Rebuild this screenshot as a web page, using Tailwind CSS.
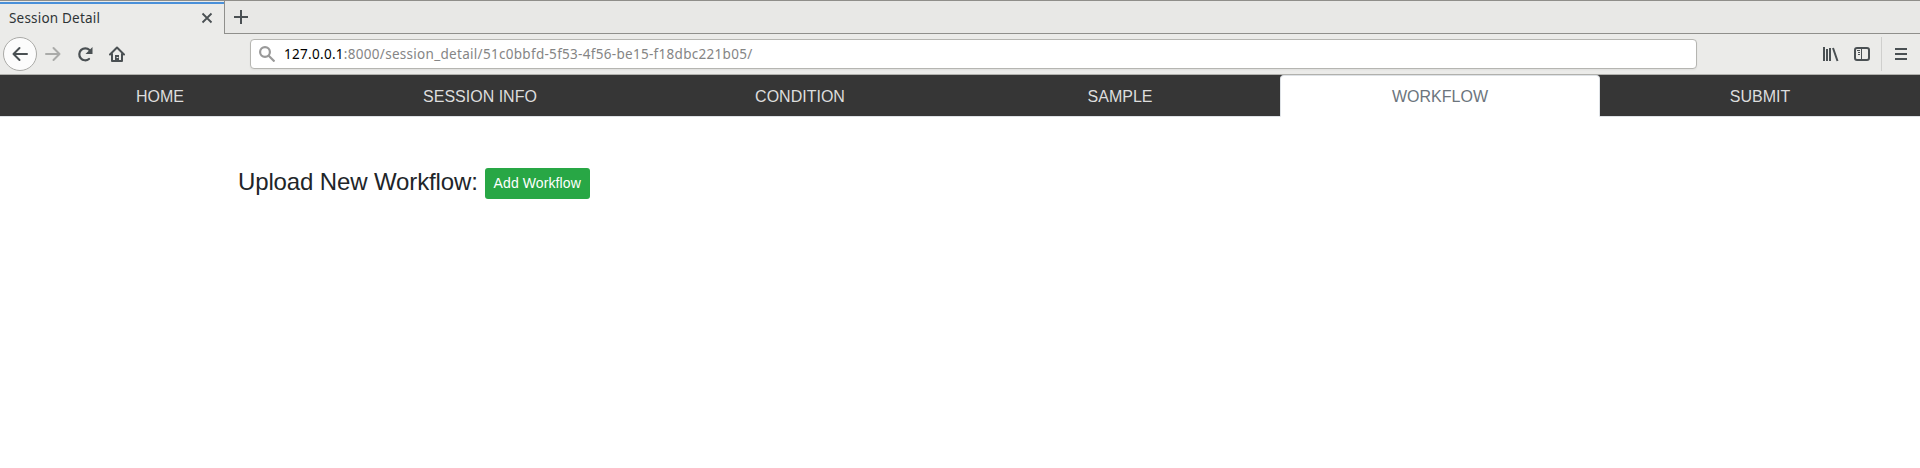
<!DOCTYPE html>
<html lang="en">
<head>
<meta charset="utf-8">
<title>Session Detail</title>
<script src="https://cdn.jsdelivr.net/npm/@tailwindcss/browser@4"></script>
</head>
<body class="h-[468px] overflow-hidden bg-white font-['Liberation_Sans',Arial,sans-serif] text-[#212529]">
<header class="font-['Noto_Sans',sans-serif] text-[#2e3436]">
  <div class="flex h-[34px] border-t border-[#8f8e8a] bg-[#e8e8e6]">
    <div class="flex w-[225px] items-center border-r border-[#8f8f8c] bg-[#ebebe9]">
      <div class="flex h-full w-full flex-col">
        <div class="mt-px h-[2px] bg-[#4a90d9]"></div>
        <div class="flex flex-1 items-center justify-between pr-[11px] pl-[9px]">
          <span class="-mt-0.5 text-[13.5px] leading-5 tracking-[0.2px]">Session Detail</span>
          <svg class="-mt-[3px] size-3" viewBox="0 0 12 12" fill="none" stroke="#4a5053" stroke-width="1.8"><path d="M1.5 1.5l9 9M10.5 1.5l-9 9"/></svg>
        </div>
      </div>
    </div>
    <div class="flex flex-1 border-b border-[#8f8f8c] pt-[9px] pl-[9px]">
      <svg class="size-[14px]" viewBox="0 0 14 14" fill="none" stroke="#4a5053" stroke-width="2"><path d="M7 0v14M0 7h14"/></svg>
    </div>
  </div>
  <div class="flex h-[41px] items-center border-b border-[#b1b1ad] bg-[#ebebe9]">
    <div class="ml-[3px] flex size-[34px] items-center justify-center rounded-full border border-[#aaaaa7] bg-[#fcfcfc]">
      <svg class="size-4" viewBox="0 0 16 16" fill="none" stroke="#4a5053" stroke-width="2" stroke-linecap="round" stroke-linejoin="round"><path d="M15 8H1.5M7.5 2l-6 6 6 6"/></svg>
    </div>
    <svg class="ml-2 size-4" viewBox="0 0 16 16" fill="none" stroke="#aaaba9" stroke-width="2" stroke-linecap="round" stroke-linejoin="round"><path d="M1 8h13.5M8.500 2l6 6-6 6"/></svg>
    <svg class="ml-4 size-4" viewBox="0 0 16 16" fill="none" stroke="#4a5053" stroke-width="2.200"><path d="M12.500 4A6 6 0 1 0 12 13" stroke-linecap="round"/><path d="M15.500 1v7H8.500z" fill="#4a5053" stroke="none"/></svg>
    <svg class="ml-4 size-4" viewBox="0 0 16 16" fill="none" stroke="#4a5053" stroke-width="2" stroke-linecap="round" stroke-linejoin="round"><path d="M1 8.500l7-7 7 7M3 8v7h10V8"/><path d="M6 9h4v6H6z" fill="#4a5053" stroke="none"/><path d="M8 11.500h1" stroke="#ebebe9" stroke-width="1"/></svg>
    <div class="ml-[125px] flex h-[30px] w-[1447px] items-center rounded border border-[#b5b5b1] bg-white pl-2 shadow-xs">
      <svg class="size-4" viewBox="0 0 16 16" fill="none" stroke="#999" stroke-width="2.200"><circle cx="6" cy="6" r="4.900"/><path d="M9.500 9.500l6 6"/></svg>
      <span class="ml-[9px] text-[13.5px] leading-5 tracking-[0.295px] text-[#858585]"><span class="text-black">127.0.0.1</span>:8000/session_detail/51c0bbfd-5f53-4f56-be15-f18dbc221b05/</span>
    </div>
    <svg class="ml-[126px] size-4" viewBox="0 0 16 16" fill="none" stroke="#4a5053" stroke-width="2"><path d="M1 1v14M4 3v12M7 2v13M10 2l4.500 13"/></svg>
    <svg class="ml-[15px] h-[14px] w-4" viewBox="0 0 16 14" fill="none" stroke="#4a5053"><rect x="1" y="1" width="14" height="12" rx="2" stroke-width="2"/><path d="M7.500 1v12M3 3.500h3M4 5.500h2M4 7.500h2"/></svg>
    <div class="ml-[11px] h-[34px] w-px bg-[#cfcfcd]"></div>
    <svg class="ml-[13px] h-3 w-3" viewBox="0 0 12 12" fill="#4a5053"><path d="M0 0h12v2H0zM0 5h12v2H0zM0 10h12v2H0z"/></svg>
  </div>
</header>
<nav class="grid h-[42px] grid-cols-6 border-b border-[#dee2e6] bg-[#363636] text-center text-base leading-6 text-[#dddddd]">
  <a class="pt-[10px]">HOME</a>
  <a class="pt-[10px]">SESSION INFO</a>
  <a class="pt-[10px]">CONDITION</a>
  <a class="pt-[10px]">SAMPLE</a>
  <a class="-mb-px rounded-t border border-[#dee2e6] border-b-white bg-white pt-[9px] text-[#6c757d]">WORKFLOW</a>
  <a class="pt-[10px]">SUBMIT</a>
</nav>
<main class="flex items-center pt-[51px] pl-[238px]">
  <h4 class="-mt-[5px] text-2xl leading-[29px] tracking-[-0.13px]">Upload New Workflow:</h4>
  <button class="ml-[7px] h-[31px] w-[105px] rounded-[3px] bg-[#28a745] text-sm leading-[21px] tracking-[0.1px] text-white">Add Workflow</button>
</main>
</body>
</html>
